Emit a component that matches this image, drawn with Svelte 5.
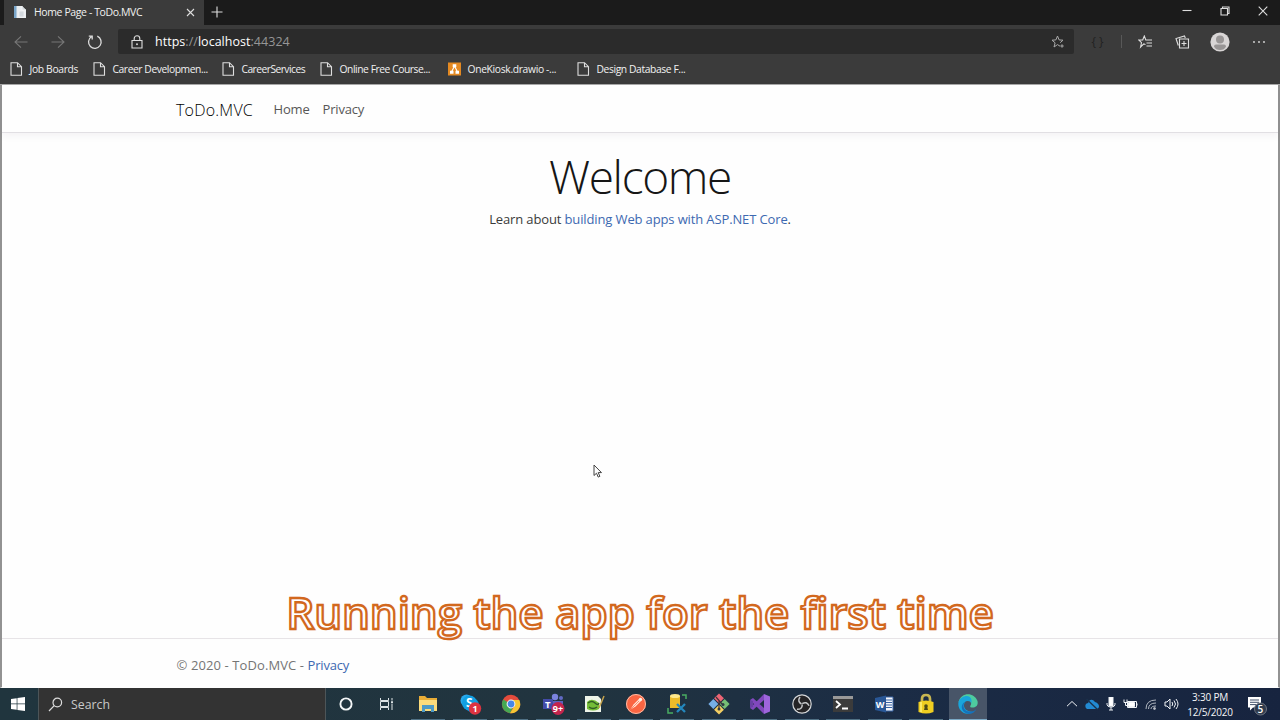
<script lang="ts">
  const bookmarks = [
    { title: 'Job Boards', icon: 'page', width: 83, spacing: -0.33 },
    { title: 'Career Developmen...', icon: 'page', width: 129, spacing: -0.43 },
    { title: 'CareerServices', icon: 'page', width: 98, spacing: -0.55 },
    { title: 'Online Free Course...', icon: 'page', width: 128, spacing: -0.45 },
    { title: 'OneKiosk.drawio -...', icon: 'drawio', width: 129, spacing: -0.33 },
    { title: 'Design Database F...', icon: 'page', width: 120, spacing: -0.4 }
  ];

  const apps = [
    'explorer', 'skype', 'chrome', 'teams', 'notepad', 'postman', 'ssms',
    'git', 'vs', 'obs', 'terminal', 'word', 'lock', 'edge'
  ];
</script>

<div class="screen">
  <header class="browser">
    <div class="tab-strip">
      <div class="tab">
        <svg class="favicon" width="14" height="14" viewBox="0 0 14 14">
          <path d="M1 1h8l4 4v8H1z" fill="#e9edf0" />
          <path d="M1 1h2.5v12H1z" fill="#79a5c9" />
          <path d="M9 1v4h4M6 6h5v6H6z" fill="#d3d9de" stroke="#f8f8f8" stroke-width=".7" />
        </svg>
        <span class="tab-title">Home Page - ToDo.MVC</span>
        <svg class="tab-close" width="9" height="9" viewBox="0 0 9 9"><path d="M1 1l7 7M8 1L1 8" /></svg>
      </div>
      <svg class="new-tab" width="12" height="12" viewBox="0 0 12 12"><path d="M6 .5v11M.5 6h11" /></svg>
      <div class="window-buttons">
        <svg width="10" height="10" viewBox="0 0 10 10"><path d="M.5 4.5h9" /></svg>
        <svg width="10" height="10" viewBox="0 0 10 10"><path d="M1 2.5h6.5V9H1zM2.5 2.5V1H9v6.5H7.5" /></svg>
        <svg width="10" height="10" viewBox="0 0 10 10"><path d="M.7.7l8.6 8.6M9.3.7L.7 9.3" /></svg>
      </div>
    </div>

    <div class="toolbar">
      <div class="nav-buttons">
        <svg class="dim" width="14" height="14" viewBox="0 0 14 14"><path d="M13.5 7H1M7 1.3L1 7l6 5.7" /></svg>
        <svg class="dim" width="14" height="14" viewBox="0 0 14 14"><path d="M.5 7H13M7 1.3L13 7l-6 5.7" /></svg>
        <svg width="16" height="16" viewBox="0 0 16 16"><path d="M10.3 2.2A6.3 6.3 0 1 1 4.3 2.8M1.8 2.2h3.4v3.4" stroke-width="1.3" /></svg>
      </div>
      <div class="address">
        <svg class="padlock" width="12" height="14" viewBox="0 0 12 14">
          <path d="M1 5.5h10V13H1zM3.2 5.5V3.6a2.8 2.8 0 0 1 5.6 0v1.9" /><circle cx="6" cy="9.2" r=".4" />
        </svg>
        <span class="url">https<i>://</i>localhost<i>:44324</i></span>
        <svg class="add-star" width="14" height="14" viewBox="0 0 14 14">
          <path d="M9 11.2L6.5 9.6 3 12l1.1-4.2L1 5.2l3.9-.3L6.500 1l1.600 3.900 3.900.3-2.800 2.500M11 9.300v3.400M9.300 11h3.400" />
        </svg>
      </div>
      <div class="tools">
        <span class="braces">&#123; &#125;</span>
        <span class="divider"></span>
        <svg class="tool" width="15" height="14" viewBox="0 0 15 14">
          <path d="M7.500 9.500L5.800 8.900 2.600 12l.9-4.300L.8 5h3.900L6.300 1l1.500 4H14M8.500 8H14M8.500 11H14" />
        </svg>
        <svg class="tool" width="15" height="14" viewBox="0 0 15 14">
          <path d="M4.500 4h9v9h-9zM9 6v5M6.500 8.500h5M3.300 10.500L1 3.500 9.500 1l.8 2" />
        </svg>
        <svg class="avatar" width="20" height="20" viewBox="0 0 20 20">
          <circle cx="10" cy="10" r="9.600" fill="#d8d5d5" />
          <circle cx="10" cy="7.400" r="4" fill="#989595" />
          <path d="M4 14.500q0-2 2-2h8q2 0 2 2-1.500 3.500-6 3.500t-6-3.500z" fill="#989595" />
        </svg>
        <svg class="more" width="14" height="4" viewBox="0 0 14 4">
          <circle cx="2" cy="2" r=".9" /><circle cx="7" cy="2" r=".9" /><circle cx="12" cy="2" r=".9" />
        </svg>
      </div>
    </div>

    <nav class="bookmarks">
      {#each bookmarks as b (b.title)}
        <div class="bookmark" style="width: {b.width}px">
          {#if b.icon === 'page'}
            <svg width="13" height="14" viewBox="0 0 13 14"><path d="M1 .7h6.500l4 4v8.600H1zM7.500.7v4h4" /></svg>
          {:else}
            <svg width="13" height="14" viewBox="0 0 13 14">
              <path d="M0 .5h13v13H0z" fill="#e58a22" stroke="none" />
              <path d="M6.500 4L3.500 10M6.500 4l3 6" stroke="#fff" />
              <path d="M4.700 2.300h3.600v3H4.700zM2 8.700h3.500v3H2zM7.500 8.700H11v3H7.500z" fill="#fff" stroke="none" />
            </svg>
          {/if}
          <span style="letter-spacing: {b.spacing}px">{b.title}</span>
        </div>
      {/each}
    </nav>
  </header>

  <div class="page">
    <nav class="navbar">
      <span class="brand">ToDo.MVC</span>
      <span class="nav-link">Home</span>
      <span class="nav-link">Privacy</span>
    </nav>
    <main>
      <h1>Welcome</h1>
      <p>Learn about <a href="#core">building Web apps with ASP.NET Core</a>.</p>
    </main>
    <footer>&copy; 2020 - ToDo.MVC - <a href="#privacy">Privacy</a></footer>
  </div>

  <div class="taskbar">
    <div class="start">
      <svg width="14" height="14" viewBox="0 0 14 14"><path d="M0 2l5.700-.8v5.400H0zM6.400 1.100L14 0v6.600H6.400zM0 7.300h5.700v5.500L0 12zM6.400 7.300H14V14l-7.600-1.100z" fill="#fff" /></svg>
    </div>
    <div class="search">
      <svg width="15" height="15" viewBox="0 0 15 15"><circle cx="9.300" cy="5.500" r="4.300" /><path d="M6.200 8.700L1 14" /></svg>
      <span>Search</span>
    </div>
    <div class="shell-button">
      <svg width="14" height="14" viewBox="0 0 14 14"><circle cx="7" cy="7" r="5.600" fill="none" stroke="#f3f6f7" stroke-width="1.900" /></svg>
    </div>
    <div class="shell-button">
      <svg width="15" height="14" viewBox="0 0 15 14" fill="none" stroke="#dce3e5">
        <path d="M1.500 1v2.500h8V1M1.500 13v-2.500h8V13M1.500 4.500v5h8v-5zM13 1v2.500M13 7v6" /><path d="M12 5.200h2" stroke-width="2" />
      </svg>
    </div>

    <div class="apps">
      {#each apps as app (app)}
        <div class="app" class:active={app === 'edge'}>
          <svg width="24" height="24" viewBox="0 0 24 24">
            {#if app === 'explorer'}
              <path d="M3 4h6l2 2h10v13H3z" fill="#e9ad37" />
              <path d="M3 8h18v11H3z" fill="#fbdc7c" />
              <path d="M6 20v-7h12v7h-3v-3H9v3z" fill="#4c9ac7" />
            {:else if app === 'skype'}
              <circle cx="8.500" cy="8.500" r="6" fill="#28a8ea" /><circle cx="14" cy="13" r="7" fill="#0795dc" />
              <circle cx="11.500" cy="11" r="7.500" fill="#119fe2" />
              <text x="8" y="14.500" font-size="12" font-weight="700" fill="#fff">S</text>
              <circle cx="17" cy="16.500" r="6.200" fill="#dc3340" />
              <text x="14.500" y="20" font-size="9" font-weight="700" fill="#fff">1</text>
            {:else if app === 'chrome'}
              <circle cx="12" cy="12" r="9.200" fill="#e54b3c" />
              <path d="M12 12L4.200 7.500A9.200 9.200 0 0 0 11 21.200l4-7.700z" fill="#45a853" />
              <path d="M12 8h8.300A9.200 9.200 0 0 1 11 21.200l4.500-7.200z" fill="#f5c633" />
              <circle cx="12" cy="12" r="4.400" fill="#f4f4f4" /><circle cx="12" cy="12" r="3.400" fill="#4687e8" />
            {:else if app === 'teams'}
              <circle cx="14" cy="5" r="3.200" fill="#7b83dd" /><circle cx="20" cy="6" r="2" fill="#6169c4" />
              <path d="M9 9h13v7q-2 5-8 4-5-2-5-7z" fill="#5b62bd" />
              <path d="M2 7h10v10H2z" fill="#434ba8" />
              <text x="4" y="15.500" font-size="9.500" font-weight="700" fill="#fff">T</text>
              <circle cx="17" cy="16.500" r="6.500" fill="#c4244d" />
              <text x="11.800" y="20" font-size="9" font-weight="700" fill="#fff">9+</text>
            {:else if app === 'notepad'}
              <path d="M3 4h13l3 3v13H3z" fill="#eef4e9" />
              <path d="M5 10q5-5 12 1v6q-6 3-12 0z" fill="#74bd37" />
              <path d="M6 11q4-3 7 0t4 0M7 15q4 3 8 0" fill="none" stroke="#315c25" stroke-width="1.300" />
              <path d="M22 4l-5 12" stroke="#c6a34d" stroke-width="1.500" />
            {:else if app === 'postman'}
              <circle cx="12" cy="12" r="10" fill="#fa6542" />
              <circle cx="12" cy="12" r="9.500" fill="none" stroke="#ffd0bd" stroke-width=".8" />
              <path d="M6.500 17.500l3-5L15 7l2 2-5.500 5.500z" fill="#ffe3d4" />
              <path d="M7 17l9-9" stroke="#fa6542" stroke-width=".7" />
              <circle cx="16.500" cy="7.500" r="1.700" fill="#fff1e7" />
            {:else if app === 'ssms'}
              <path d="M5 4h10v12H5z" fill="#edbc2a" /><ellipse cx="10" cy="4" rx="5" ry="2" fill="#ffe98b" />
              <path d="M17 3h4v4M3 16v5h5" fill="none" stroke="#4aad62" stroke-width="1.500" />
              <path d="M12 12l8 8M20 12l-8 8" stroke="#2487bd" stroke-width="2.300" />
            {:else if app === 'git'}
              <g transform="rotate(45 12 12)">
                <path d="M4.500 4.500h7v7h-7z" fill="#ed6575" /><path d="M12.500 4.500h7v7h-7z" fill="#75bd75" />
                <path d="M4.500 12.500h7v7h-7z" fill="#76afe7" /><path d="M12.500 12.500h7v7h-7z" fill="#f3ce63" />
              </g>
              <path d="M9 5l6 7M12 8v8" stroke="#40343b" stroke-width="1.200" />
              <circle cx="16" cy="12.500" r="1.500" fill="#303942" /><circle cx="12" cy="17" r="1.500" fill="#303942" />
            {:else if app === 'vs'}
              <path d="M16 2l6 2.500v15L16 22z" fill="#9e65dc" />
              <path d="M16 2v6L5 18l-3-2zM2 8l3-2 11 10v6z" fill="#8148bd" />
              <path d="M2 8v8l3-1V9z" fill="#6840a4" />
            {:else if app === 'obs'}
              <circle cx="12" cy="12" r="9.200" fill="#252426" stroke="#d6d8da" stroke-width="1.200" />
              <g fill="none" stroke="#c4c6c8" stroke-width="1.500">
                <path d="M10 5q-3 4.500 1.500 7" />
                <path d="M10 5q-3 4.500 1.500 7" transform="rotate(120 12 12)" />
                <path d="M10 5q-3 4.500 1.500 7" transform="rotate(240 12 12)" />
              </g>
            {:else if app === 'terminal'}
              <path d="M2 5h20v15H2z" fill="#3b3b3b" /><path d="M2 4h20v3H2z" fill="#999" />
              <path d="M5 9l4 3.500L5 16M11 16.500h6" fill="none" stroke="#fff" stroke-width="1.800" />
            {:else if app === 'word'}
              <path d="M12 5h8v14h-8z" fill="#f4f6fa" stroke="#3b65a5" />
              <path d="M13 8h6M13 10.500h6M13 13h6M13 15.500h6" stroke="#3964a5" />
              <path d="M2 6l11-2.500v17L2 18z" fill="#295796" />
              <text x="2.800" y="16" font-size="9" font-weight="700" fill="#fff">W</text>
            {:else if app === 'lock'}
              <path d="M8 11V7q0-4 4-4t4 4v4" fill="none" stroke="#c8b651" stroke-width="2.700" />
              <path d="M4.500 10q7.500-3 15 0v10q-7.500 3-15 0z" fill="#efce21" />
              <path d="M7 10v10" stroke="#fff27b" stroke-width="1.500" />
              <circle cx="12" cy="14" r="1.800" fill="#4e4a17" /><path d="M11 14h2l1 4h-4z" fill="#4e4a17" />
            {:else}
              <path d="M2.500 10C5 0 18-.5 21.500 9c1 5-2 7-6 6.500q-2-.5-1-2 2-3-2-5.500-4-2-10 2z" fill="#4ecb9f" />
              <path d="M2.500 10c3-7 12-8 13-2v4q0-3-4-3c-5 0-6 11 5.500 11-8 5-16-2-14.500-10z" fill="#19a6dc" />
              <path d="M10 9.500c-5 3-2 11 5 10 3 0 4-1 5.500-3-2 6-9 7-13 3-3-4-2-8 2.500-10z" fill="#1473bd" />
            {/if}
          </svg>
        </div>
      {/each}
    </div>

    <div class="tray">
      <svg width="12" height="12" viewBox="0 0 12 12"><path d="M1 8.200L6 3.500l5 4.700" /></svg>
      <svg width="14" height="12" viewBox="0 0 14 12"><path d="M2 11h10q3-1 1.500-4.500Q12 4 10 4 7 0 4 3 3 4 3.500 5 .5 5 .3 8q0 2 1.700 3z" fill="#228ad3" stroke="none" /><path d="M1.500 1l11 10.500" stroke="#1b314b" stroke-width="1.300" /></svg>
      <svg width="10" height="14" viewBox="0 0 10 14"><path d="M3 0h4v9H3z" fill="#fff" /><path d="M1 6q-.5 4 4 4t4-4M5 10v3M3 13h4" /></svg>
      <svg width="15" height="12" viewBox="0 0 15 12"><path d="M4.500 3.500h9v6h-9zM14 5.500v2" /><path d="M5.500 4.500h6v4h-6z" fill="#fff" /><path d="M1 1.500v3h3v-3M2.500 4v3.500h2" /></svg>
      <svg width="12" height="12" viewBox="0 0 12 12" opacity=".7"><path d="M1 11Q1 2 11 2M3.500 11q0-6 7.500-6M6 11q0-3 5-3" /><circle cx="9.500" cy="10.500" r="1" fill="#fff" /></svg>
      <svg width="15" height="12" viewBox="0 0 15 12"><path d="M1 4h2l3-3v10L3 8H1zM8 4q1.500 2 0 4M10 2.500q3 3.500 0 7M12 1q4 5 0 10" /></svg>
    </div>
    <div class="clock">
      <span class="time">3:30 PM</span>
      <span class="date">12/5/2020</span>
    </div>
    <div class="action-center">
      <svg width="21" height="20" viewBox="0 0 21 20">
        <path d="M1 1h13v10.500H6l-3 3v-3H1z" fill="#fff" /><path d="M3 4h9M3 6.300h9M3 8.600h6" stroke="#40516b" />
        <circle cx="13.500" cy="13" r="6" fill="#303b4d" stroke="#6e7581" />
        <text x="10.600" y="16.800" font-size="10" font-weight="600" fill="#fff">5</text>
      </svg>
    </div>
  </div>

  <div class="caption">Running the app for the first time</div>
  <svg class="cursor" width="10" height="15" viewBox="0 0 10 15"><path d="M1 1v10.500l2.500-2.300 1.700 3.900 1.700-.8-1.700-3.700h3.300z" /></svg>
</div>

<style>
  :global(body) {
    margin: 0;
    overflow: hidden;
  }

  .screen {
    position: relative;
    width: 1280px;
    height: 720px;
    display: flex;
    flex-direction: column;
    background: #fefefe;
    font-family: 'Open Sans', 'Noto Sans', sans-serif;
  }

  svg {
    flex-shrink: 0;
    display: block;
  }

  .browser {
    height: 85px;
    box-sizing: border-box;
    background: #3b3b3b;
    border-bottom: 1px solid #a9a9a9;
    color: #f1f1f1;
  }

  .browser svg {
    fill: none;
    stroke: #dedede;
    stroke-width: 1.1;
  }

  .browser .favicon,
  .browser .avatar {
    stroke: none;
  }

  .tab-strip {
    display: flex;
    align-items: flex-start;
    height: 25px;
    padding-left: 4px;
    background: #1b1b1b;
  }

  .tab {
    display: flex;
    align-items: center;
    width: 200px;
    height: 25px;
    padding: 0 9px 1px 9px;
    box-sizing: border-box;
    background: #3b3b3b;
  }

  .tab-title {
    flex: 1;
    margin-left: 7px;
    font-size: 10.5px;
    letter-spacing: -0.4px;
    white-space: nowrap;
  }

  .new-tab {
    margin: 6px 0 0 7px;
  }

  .window-buttons {
    display: flex;
    gap: 28px;
    margin: 6px 12.5px 0 auto;
  }

  .toolbar {
    display: flex;
    align-items: center;
    height: 33px;
  }

  .nav-buttons {
    display: flex;
    align-items: center;
    gap: 22.5px;
    width: 104px;
    padding-left: 14px;
  }

  .browser .dim {
    stroke: #777;
  }

  .address {
    display: flex;
    align-items: center;
    width: 956px;
    height: 25px;
    padding: 0 9px 0 13px;
    box-sizing: border-box;
    background: #2b2b2b;
    border-radius: 2px;
  }

  .url {
    flex: 1;
    margin-left: 12px;
    font-size: 12.5px;
    letter-spacing: 0.03px;
    color: #fff;
  }

  .url i {
    font-style: normal;
    color: #969696;
  }

  .browser .add-star {
    stroke: #aaa;
    stroke-width: 1;
  }

  .tools {
    display: flex;
    align-items: center;
    height: 25px;
  }

  .braces {
    width: 47px;
    text-align: center;
    font-size: 12px;
    color: #222;
  }

  .divider {
    width: 1px;
    height: 13px;
    background: #585858;
  }

  .tool {
    margin-left: 16px;
  }

  .tool + .tool {
    margin-left: 22px;
  }

  .avatar {
    margin-left: 20px;
  }

  .browser .more {
    margin-left: 22px;
    fill: #ddd;
    stroke: none;
  }

  .bookmarks {
    display: flex;
    align-items: center;
    height: 22px;
    padding-left: 9.5px;
  }

  .bookmark {
    display: flex;
    align-items: center;
    gap: 7px;
    font-size: 10.3px;
    white-space: nowrap;
  }

  .page {
    flex: 1;
    display: flex;
    flex-direction: column;
    border: solid #929292;
    border-width: 0 2px 1px;
    border-bottom-color: #fefefe;
    font-size: 13px;
  }

  .navbar {
    display: flex;
    align-items: center;
    height: 47px;
    padding-left: 174px;
    border-bottom: 1px solid #e1dfe3;
    box-shadow: 0 3px 8px rgba(40, 10, 60, 0.05);
  }

  .brand {
    width: 97.5px;
    padding-top: 2px;
    font-size: 16px;
    font-weight: 300;
    letter-spacing: 0.22px;
    color: #000;
  }

  .nav-link {
    margin-right: 13px;
    letter-spacing: -0.18px;
    color: #575757;
  }

  main {
    flex: 1;
    text-align: center;
  }

  h1 {
    margin: 12px 0 0;
    font-size: 46px;
    line-height: 62px;
    font-weight: 300;
    letter-spacing: -1.35px;
    color: #161616;
  }

  p {
    margin: 2px 0 0;
    line-height: 20px;
    letter-spacing: -0.13px;
    color: #3a3a3a;
  }

  a {
    color: #3d69b1;
    text-decoration: none;
  }

  footer {
    height: 49px;
    box-sizing: border-box;
    padding: 16px 0 0 174.5px;
    border-top: 1px solid #e7e4e7;
    line-height: 20px;
    letter-spacing: 0.1px;
    color: #757575;
  }

  footer a {
    letter-spacing: -0.2px;
  }

  .taskbar {
    display: flex;
    height: 32px;
    background: linear-gradient(90deg, #20353e 0, #21343f 45%, #1b2c45 70%, #17243f 100%);
  }

  .start {
    display: flex;
    align-items: center;
    justify-content: center;
    width: 36px;
    padding-right: 2px;
  }

  .search {
    display: flex;
    align-items: center;
    gap: 8px;
    width: 288px;
    padding-left: 9px;
    box-sizing: border-box;
    border: solid #4d5558;
    border-width: 0 1px;
    background: #333;
    color: #c9c9c9;
    font-size: 12.3px;
  }

  .search svg {
    fill: none;
    stroke: #ddd;
    stroke-width: 1.2;
  }

  .shell-button {
    display: flex;
    align-items: center;
    justify-content: center;
    width: 40px;
  }

  .apps {
    display: flex;
    gap: 7.5px;
    margin-left: 5px;
  }

  .app {
    display: flex;
    align-items: center;
    justify-content: center;
    width: 34px;
    border-bottom: 1px solid #507185;
  }

  .app.active {
    width: 38px;
    margin-left: -2px;
    background: #485568;
    border-bottom-color: #7ba9c5;
  }

  .tray {
    display: flex;
    align-items: center;
    gap: 7px;
    margin-left: auto;
  }

  .tray svg {
    fill: none;
    stroke: #f0f3f6;
    stroke-width: 1;
  }

  .clock {
    display: flex;
    flex-direction: column;
    align-items: center;
    width: 62px;
    color: #f5f6f8;
    font-size: 10px;
    line-height: 15px;
    padding-top: 2px;
    letter-spacing: -0.2px;
  }

  .action-center {
    display: flex;
    align-items: center;
    width: 39px;
    padding: 3px 0 0 6px;
    box-sizing: border-box;
  }

  .caption {
    position: absolute;
    top: 581px;
    left: 0;
    width: 1280px;
    text-align: center;
    font-size: 44px;
    line-height: 62px;
    font-weight: 600;
    letter-spacing: -0.12px;
    color: #fff;
    white-space: nowrap;
    -webkit-text-stroke: 2.3px #d2681e;
    stroke-linejoin: round;
    text-shadow: 0 0 2px #f7c48f;
  }

  .cursor {
    position: absolute;
    left: 593px;
    top: 464px;
    fill: #fff;
    stroke: #444;
    stroke-width: 1;
  }
</style>
